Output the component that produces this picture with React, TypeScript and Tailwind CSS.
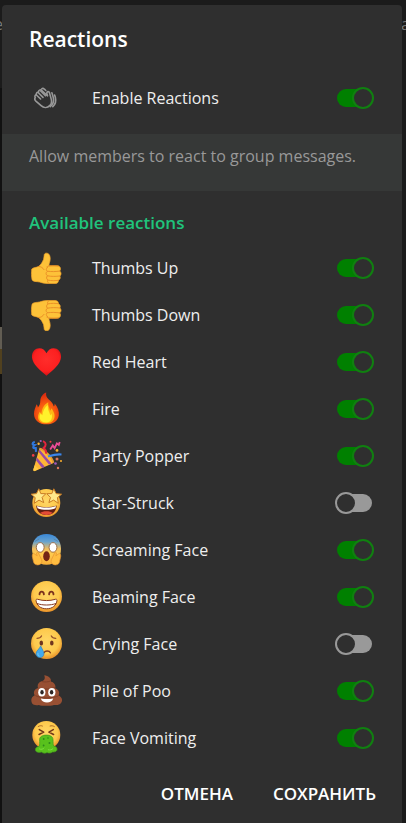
import { useState } from "react";
import type { ReactNode } from "react";

interface Reaction {
  id: string;
  label: string;
  emoji: ReactNode;
  enabled: boolean;
}

function FaceGradient({ id }: { id: string }) {
  return (
    <radialGradient id={id} cx="0.5" cy="0.42" r="0.56">
      <stop offset="0" stopColor="#ffd766" />
      <stop offset="0.72" stopColor="#fdc94c" />
      <stop offset="1" stopColor="#eb962c" />
    </radialGradient>
  );
}

function ThumbShape() {
  return (
    <>
      <path
        d="M1.8 17C3.6 15.3 6.5 15.6 8.4 14.5c2.8-1.8 4-4.6 5.1-7 .6-1.8.4-3.5.8-5 .7-2 4-1.8 5.2.6 1.2 2.8.7 5.7-.2 8.2l-.5 2.5h8.7c2.7 0 4.1 3.5 2.1 5.2 1.9 1.3 1.9 3.9.2 5 1 1.7.2 3.7-1.5 4.3.4 2-1.1 3.2-3.3 3.2H17c-4.3 0-6.4-1.6-9.5-1.8-2.2-.2-4.2-.3-5.4-1.8-.8-3.5-.8-7.5-.3-10.9Z"
        fill="#fdc239"
        stroke="#f3a329"
        strokeWidth="0.7"
      />
      <path
        d="M16.8 14.8c1.5-1.2 7-1.2 11.5-.7M17.5 19.2c4 .7 8.5.4 12.2-.1M17.4 23.8c4 .8 8.5.7 12.3.2M18 28.1c3.5.8 7.1.7 10.4.2M17.6 15.3c-1.7 1.3-1.8 3.2-.2 4-1.7 1-1.8 3.5 0 4.5-1.3 1.1-1 3.6.6 4.3-.9 1.1-.5 2.4.5 3M8.6 14.5c2.4-.2 4.4 1.5 5.4 3.1"
        fill="none"
        stroke="#e88b25"
        strokeWidth="0.9"
        strokeLinecap="round"
      />
    </>
  );
}

function EmojiSvg({ children }: { children: ReactNode }) {
  return (
    <svg viewBox="0 0 32 33" className="h-[33px] w-8" aria-hidden="true">
      {children}
    </svg>
  );
}

const thumbsUp = (
  <EmojiSvg>
    <g transform="translate(0 1)">
      <ThumbShape />
    </g>
  </EmojiSvg>
);

const thumbsDown = (
  <EmojiSvg>
    <g transform="matrix(1 0 0 -1 0 34)">
      <ThumbShape />
    </g>
  </EmojiSvg>
);

const redHeart = (
  <EmojiSvg>
    <defs>
      <radialGradient id="heart" cx="0.5" cy="0.4" r="0.62">
        <stop offset="0" stopColor="#ff2d2b" />
        <stop offset="0.7" stopColor="#fc2020" />
        <stop offset="1" stopColor="#c90f13" />
      </radialGradient>
    </defs>
    <path
      d="M16.5 30.8C13.5 28 4.5 21.8 2.4 14.6.6 8 4.5 3.2 9.3 3.2c3.2 0 5.7 1.9 7.2 5 1.5-3.1 4-5 7.2-5 4.8 0 8.7 4.8 6.9 11.4-2.1 7.2-11.1 13.4-14.1 16.2Z"
      fill="url(#heart)"
    />
  </EmojiSvg>
);

const fire = (
  <EmojiSvg>
    <defs>
      <radialGradient id="flame" cx="0.5" cy="0.68" r="0.62">
        <stop offset="0" stopColor="#ff8b12" />
        <stop offset="0.55" stopColor="#f75a10" />
        <stop offset="1" stopColor="#dc2c10" />
      </radialGradient>
    </defs>
    <path
      d="M16.2.5c-.5 3 .3 4.8 2.3 6.7 3 2.5 4.7 4.5 5.3 7.4.7-.7.9-2 .8-3.2 3.2 3.4 4.8 8 4.2 12-.9 5.4-5.6 8.9-12.2 8.9C9 32.3 4.1 28.3 4 21.9c-.1-3.7 1.6-6.9 2.6-9.7.8 1 1.2 2 1.3 3.3 2-2.3 2.3-4.3 2.4-7C10.5 5 12.8 1.8 16.2.5Z"
      fill="url(#flame)"
    />
    <path
      d="M18.3 10.2c-.6 3.7 1.2 5.2 1.7 8.6.8-.6 1.2-1.4 1.3-2.5 2.9 3.4 4.3 7.8 2.5 11.2-1.5 2.8-4.3 3.8-7.5 3.8-4.8 0-8.2-2.4-8.2-6.4 0-2.2.8-4 1.9-5.5.2 1.2.7 2 1.4 2.6.4-5.2 2.6-9.6 6.9-11.8Z"
      fill="#ffb814"
    />
    <path
      d="M18 13c-.8 5 1.6 6.5 2.2 10.2.6-.4 1-1 1.2-1.8 1.8 4.6-.6 9-5.2 9-4.2 0-6.6-2.2-6.6-5.6 0-1.4.5-2.6 1.2-3.6.3 1 .9 1.7 1.6 2.1.5-4.4 2.4-8.4 5.6-10.3Z"
      fill="#fff12b"
    />
  </EmojiSvg>
);

const partyPopper = (
  <EmojiSvg>
    <path d="M9.3 9.8c2.5-.5 6 2.4 8.8 5.2 3 3 5.6 6.6 4.9 9.2L5.1 32c-1.2.5-2-.3-1.7-1.5L9.3 9.8Z" fill="#ffb735" />
    <path d="m8.7 13 10.2 12.6 2.6-1.2L9.5 10.4l-.8 2.6ZM6.1 21.4l6.1 7.6 2.6-1.2-7.9-9.2-.8 2.8Z" fill="#9a4aa5" />
    <path d="M4.7 26.2 8.5 30l-3.2 1.8c-1.4.6-2.2-.2-1.9-1.5l1.3-4.1Z" fill="#ffca45" />
    <path d="M9.3 9.7c3.8 0 13.6 8.6 14 14.2" fill="none" stroke="#e29b34" strokeWidth="1.8" />
    <path d="M13 2.1c3.5 1.6 3.4 4.4.6 6.9 3 2.3 2.8 3.8 2.4 5.6" fill="none" stroke="#e5243c" strokeWidth="2" />
    <path d="m20.2 10.5 2.6-4.1 1.8 2.8 2.3-4.8 1.9 1.6.9-3" fill="none" stroke="#ed4c96" strokeWidth="1.8" />
    <path d="M18 17.5c4.5-1.4 6.7-2.5 13.5-2" fill="none" stroke="#3a86ea" strokeWidth="2.2" />
    <path d="M4.8 2.8c-3 1-2.9 3 0 3.2-2.4 1.9-2.2 3.5 1 3.1l.2 3.8" fill="none" stroke="#2f76da" strokeWidth="2.1" />
    <g fill="#f23c45"><circle cx="3.2" cy="16.4" r="1.3" /><circle cx="20.5" cy="2.8" r="1" /></g>
    <g fill="#ffb22f"><circle cx="8.6" cy="4.8" r="1.2" /><circle cx="27" cy="11.4" r="1.4" /><circle cx="31" cy="22" r="1" /></g>
    <g fill="#a35abf"><circle cx="10.7" cy="2" r="1.1" /><circle cx="25.5" cy="24.5" r="1.3" /></g>
    <g fill="#dc795c"><circle cx="27" cy="20" r="1.5" /><circle cx="28" cy="29" r="1.2" /></g>
  </EmojiSvg>
);

const starStruck = (
  <EmojiSvg>
    <defs><FaceGradient id="face-star" /></defs>
    <circle cx="16.3" cy="17" r="14" fill="url(#face-star)" />
    <path d="M6.2 19.5c6.1 2.2 14.4 2.2 20.5 0-.4 6-4.3 9.6-10.2 9.6S6.5 25.5 6.2 19.5Z" fill="#621d13" />
    <path d="M7 20c5.8 2 13.3 2 19 0l-.5 2.2c-5.2 2-12.8 2-18 0L7 20Z" fill="#fff" />
    <path d="M10.3 26.8c2.3-2.1 9.9-2.1 12.3 0-3 3-9.2 3-12.3 0Z" fill="#e34b35" />
    <g fill="#ffe98b" stroke="#c97b22" strokeWidth="1" strokeLinejoin="round">
      <path d="m8.8 2.8 2 4.8 5 .1-3.7 3.7 1.6 5.2-4.7-2.5-4.7 3.2.9-5.7L1 8.2l5.5-.6 2.3-4.8Z" />
      <path d="m23.8 2.8-2 4.8-5 .1 3.7 3.7-1.6 5.2 4.7-2.5 4.7 3.2-.9-5.7 4.2-3.4-5.5-.6-2.3-4.8Z" />
    </g>
  </EmojiSvg>
);

const screamingFace = (
  <EmojiSvg>
    <defs>
      <linearGradient id="face-scream" x2="0" y2="1">
        <stop offset="0" stopColor="#3987d7" />
        <stop offset="0.25" stopColor="#68a3cf" />
        <stop offset="0.48" stopColor="#efbd60" />
        <stop offset="0.65" stopColor="#ffcb4e" />
        <stop offset="1" stopColor="#f7ae38" />
      </linearGradient>
    </defs>
    <path d="M16.5 1C25.1 1 31 6.8 31 15.7c0 8.7-5.3 16-14.5 16S2 24.4 2 15.7C2 6.8 7.9 1 16.5 1Z" fill="url(#face-scream)" />
    <path d="M3.6 20.3c-1 .4-1.7 2.3-1.1 4.1l1.1 4.7c.5 2.3 2.8 3.2 5.4 2.6 2.4-.5 3.5-2.4 2.6-5L8.4 20c-.7-1.4-2.3-.7-1.8 1l.6 1.8-3.6-2.5ZM29.4 20.3c1 .4 1.7 2.3 1.1 4.1l-1.1 4.7c-.5 2.3-2.8 3.2-5.4 2.6-2.4-.5-3.5-2.4-2.6-5l3.2-6.7c.7-1.4 2.3-.7 1.8 1l-.6 1.8 3.6-2.5Z" fill="#ffbd41" stroke="#e69430" strokeWidth="0.7" />
    <g fill="#fff" stroke="#8a542d" strokeWidth="0.8"><ellipse cx="10.2" cy="14.4" rx="3.9" ry="4.8" /><ellipse cx="23" cy="14.4" rx="3.9" ry="4.8" /></g>
    <ellipse cx="16.5" cy="23.2" rx="3.3" ry="5" fill="#722516" />
    <path d="M5.2 8.3 9 6.1m15 0 3.8 2.2" fill="none" stroke="#5580a5" strokeWidth="0.8" strokeLinecap="round" />
  </EmojiSvg>
);

const beamingFace = (
  <EmojiSvg>
    <defs><FaceGradient id="face-beam" /></defs>
    <circle cx="16.5" cy="16.5" r="15.5" fill="url(#face-beam)" />
    <path d="M9.5 14.4c.2-3.6 4.2-3.6 4.4 0m5.2 0c.2-3.6 4.2-3.6 4.4 0" fill="none" stroke="#7b321c" strokeWidth="1.8" strokeLinecap="round" />
    <path d="M6 20.3c0-1 .8-1.3 1.7-1 5.6 1.7 12 1.7 17.6 0 .9-.3 1.7 0 1.7 1-.4 5.2-4.7 8.5-10.5 8.5S6.4 25.5 6 20.3Z" fill="#fff" stroke="#87391f" strokeWidth="1" />
    <path d="M7 23.5c5.5 2 13.5 2 19 0" fill="none" stroke="#87391f" strokeWidth="1" />
  </EmojiSvg>
);

const cryingFace = (
  <EmojiSvg>
    <defs><FaceGradient id="face-cry" /></defs>
    <circle cx="16.5" cy="16.5" r="15.5" fill="url(#face-cry)" />
    <g fill="#70351e"><ellipse cx="11.3" cy="16" rx="1.8" ry="2.5" /><ellipse cx="21.8" cy="16" rx="1.8" ry="2.5" /></g>
    <path d="M7 11.3c2 0 3.7-.8 4.5-2.4m9.8 0c.8 1.6 2.5 2.4 4.5 2.4" fill="none" stroke="#96502b" strokeWidth="1.2" strokeLinecap="round" />
    <path d="M14 25.8c1.1-2.4 5.3-2.4 6.4 0" fill="none" stroke="#843b1d" strokeWidth="1.4" strokeLinecap="round" />
    <path d="M10.7 18.8c1 3 3.2 5.2 3.2 7.9 0 2.3-1.6 3.9-3.9 3.9-2.6 0-4.1-1.7-4-4 .2-2.9 3.5-4.6 4.7-7.8Z" fill="#43a9ed" stroke="#2e7eb6" strokeWidth="0.6" />
    <path d="M8 26.2c-.4 1.8.5 2.6 1.5 2.9" fill="none" stroke="#79d0ff" strokeWidth="1" />
  </EmojiSvg>
);

const pileOfPoo = (
  <EmojiSvg>
    <path
      d="M14.2 1.3c4.8.7 7.3 3.2 6.7 6.2 3.5 1 5.4 4 4.1 6.7 3.6 1.2 5.2 4.4 3.5 7.1 3.4 1.8 4.6 4.9 2.5 7.8-1.4 2-4.3 2.3-7.1 1.8-4 1.2-11.7 1.2-15 0-3 .6-6 .1-7-2-1.4-3.1-.3-6.1 2.8-7.6-1.9-2.9-.4-6.3 3.3-7.3-1.1-3.3.6-5.8 3.6-6.7 2.9-.7 3.9-2.7 2.6-6Z"
      fill="#985033"
    />
    <path d="M9 14.3c5.2 1.3 11.7 1.1 16-1M5.8 21.8c4.2 2.8 18.2 2.9 22.5 0M12 7.6c2.7.7 6.4.5 8.6-.7" fill="none" stroke="#7c3d27" strokeWidth="0.9" strokeLinecap="round" />
    <g fill="#fff"><ellipse cx="11.8" cy="18.2" rx="3.6" ry="4.3" /><ellipse cx="21.8" cy="18.2" rx="3.6" ry="4.3" /></g>
    <g fill="#2d2523"><ellipse cx="12" cy="18.2" rx="1.7" ry="2.3" /><ellipse cx="21.6" cy="18.2" rx="1.7" ry="2.3" /></g>
    <path d="M10.8 24.4c4 .9 8.6.9 12.4 0-1.1 5.4-11.3 5.4-12.4 0Z" fill="#fff" />
  </EmojiSvg>
);

const faceVomiting = (
  <EmojiSvg>
    <defs><FaceGradient id="face-vomit" /></defs>
    <circle cx="16.3" cy="14" r="14" fill="url(#face-vomit)" />
    <path d="m9.3 8.6 4.4 2.5L9 13.5m14.3-4.9-4.4 2.5 4.7 2.4" fill="none" stroke="#733619" strokeWidth="1.5" strokeLinecap="round" strokeLinejoin="round" />
    <path d="M8.2 5.5c1.7-1 3.1-1 4.2-.5m7.7 0c1.5-.5 2.9-.2 4.2.5" fill="none" stroke="#a96726" strokeWidth="1" strokeLinecap="round" />
    <path
      d="M9.6 18.6c0-3 3-4.5 6.7-4.5s6.7 1.5 6.7 4.5c.3 2.7-.2 5 .8 6.5 2.5.4 3.8 2.2 3.1 4.2-.8 1.7-3.1 1.8-4.4 1.6-1.5 1.5-4 1.3-5.4.6-1.7 1-4.3.9-5.5-.4-2.4.6-6 .4-6.2-2-.2-2.2 1.5-3.2 3.8-3.8.8-1.5.4-4.2.4-6.7Z"
      fill="#58c11c"
      stroke="#429a1b"
      strokeWidth="0.7"
    />
    <g fill="#2d891b"><circle cx="13.7" cy="18" r="0.9" /><circle cx="18" cy="17" r="0.8" /><circle cx="19.5" cy="22" r="1" /><circle cx="13.6" cy="24.5" r="0.9" /></g>
    <path d="M9.5 28c2 .9 3.6 0 4.5-1m4.3 1.8c1.8.5 3.6-.1 4.5-1" fill="none" stroke="#7ddd3d" strokeWidth="1" strokeLinecap="round" />
  </EmojiSvg>
);

const initialReactions: Reaction[] = [
  { id: "thumbs-up", label: "Thumbs Up", emoji: thumbsUp, enabled: true },
  { id: "thumbs-down", label: "Thumbs Down", emoji: thumbsDown, enabled: true },
  { id: "red-heart", label: "Red Heart", emoji: redHeart, enabled: true },
  { id: "fire", label: "Fire", emoji: fire, enabled: true },
  { id: "party-popper", label: "Party Popper", emoji: partyPopper, enabled: true },
  { id: "star-struck", label: "Star-Struck", emoji: starStruck, enabled: false },
  { id: "screaming-face", label: "Screaming Face", emoji: screamingFace, enabled: true },
  { id: "beaming-face", label: "Beaming Face", emoji: beamingFace, enabled: true },
  { id: "crying-face", label: "Crying Face", emoji: cryingFace, enabled: false },
  { id: "pile-of-poo", label: "Pile of Poo", emoji: pileOfPoo, enabled: true },
  { id: "face-vomiting", label: "Face Vomiting", emoji: faceVomiting, enabled: true },
];

function HandsIcon() {
  return (
    <svg
      viewBox="0 0 24 24"
      className="size-6"
      fill="none"
      stroke="#999"
      strokeWidth="1.6"
      strokeLinecap="round"
      strokeLinejoin="round"
      aria-hidden="true"
    >
      <path d="M9 11.4 4.6 7M6.6 13 2.4 9M11.4 9.8 6.6 5" />
      <path d="M1.6 14.8c-1-1.1-1.1-2.2-.3-3-.8-1.2-.3-2.8 1-3.2-.2-1.5.8-2.6 2.2-2.5-.1-1.8 1.8-3 3.1-1.7l5.9 5.4-.6-2.6c-.3-1.7 2-2.3 2.5-.6l1.7 6c.8 2.8.5 5.2-1.1 6.8-2.6 2.7-6.3 2.8-8.9.3l-5.5-4.9Z" />
      <path d="M7.6 3c.9-.8 2-.6 2.8.2l1.4 1.3M17.9 6.7l1.3 4.6c1 3.7.2 6.7-2.9 9.4M20.6 9l.8 2.6c.9 3.6 0 6.7-2.6 9.1" />
    </svg>
  );
}

interface SettingRowProps {
  id: string;
  label: string;
  icon: ReactNode;
  checked: boolean;
  onChange: () => void;
}

function SettingRow({ id, label, icon, checked, onChange }: SettingRowProps) {
  return (
    <div className="flex h-[47px] items-center pr-[30px] pl-7">
      <span className="flex w-8 shrink-0 justify-center">{icon}</span>
      <label htmlFor={id} className="ml-[30px] flex-1 text-base leading-6">
        {label}
      </label>
      <input
        id={id}
        type="checkbox"
        checked={checked}
        onChange={onChange}
        className="relative h-[18px] w-[35px] shrink-0 cursor-pointer appearance-none rounded-full bg-[#999] before:absolute before:-top-0.5 before:-left-0.5 before:size-[22px] before:rounded-full before:border-2 before:border-[#999] before:bg-[#2f2f2f] checked:bg-[#008000] checked:before:left-[15px] checked:before:border-[#108010]"
      />
    </div>
  );
}

// Slivers of the chat that stay visible around the dialog
function ChatBackdrop() {
  return (
    <div className="absolute inset-0 -z-10 overflow-hidden bg-[#1b1b1b] text-base text-[#777]" aria-hidden="true">
      <div className="absolute top-[88px] bottom-0 left-0 w-1 bg-[#111]" />
      <div className="absolute top-[327px] left-0 h-[22px] w-1 bg-[#625d53]" />
      <div className="absolute top-[349px] left-0 h-[25px] w-1 bg-[#51411f]" />
      <span className="absolute top-3 -left-1.5 leading-6">e</span>
      <span className="absolute top-3 -right-1 leading-6">a</span>
    </div>
  );
}

export default function App() {
  const [reactionsEnabled, setReactionsEnabled] = useState(true);
  const [reactions, setReactions] = useState(initialReactions);

  const toggleReaction = (id: string) => {
    setReactions((current) =>
      current.map((reaction) => (reaction.id === id ? { ...reaction, enabled: !reaction.enabled } : reaction)),
    );
  };

  return (
    <div className="relative isolate flex min-h-screen flex-col pt-[5px] pr-1 pl-0.5 font-['Open_Sans','Noto_Sans',sans-serif] text-[#eee]">
      <ChatBackdrop />
      <main className="flex-1 rounded-t bg-[#2f2f2f]">
        <h1 className="px-[27px] pt-5 text-[21px] leading-7 font-semibold text-white">Reactions</h1>

        <div className="pt-[21px] pb-[13px]">
          <SettingRow
            id="enable-reactions"
            label="Enable Reactions"
            icon={<HandsIcon />}
            checked={reactionsEnabled}
            onChange={() => setReactionsEnabled(!reactionsEnabled)}
          />
        </div>
        <p className="bg-[#363837] px-[27px] pt-2.5 pb-[23px] text-base leading-6 text-[#999]">
          Allow members to react to group messages.
        </p>

        <section>
          <h2 className="px-[27px] pt-5 pb-[9px] text-[17px] leading-6 font-semibold text-[#20c47c]">
            Available reactions
          </h2>
          <ul>
            {reactions.map((reaction) => (
              <li key={reaction.id}>
                <SettingRow
                  id={reaction.id}
                  label={reaction.label}
                  icon={reaction.emoji}
                  checked={reaction.enabled}
                  onChange={() => toggleReaction(reaction.id)}
                />
              </li>
            ))}
          </ul>
        </section>

        <footer className="flex justify-end gap-10 px-[26px] pt-[21px] pb-4 text-[17px] leading-6 font-semibold text-white">
          <button type="button">ОТМЕНА</button>
          <button type="button">СОХРАНИТЬ</button>
        </footer>
      </main>
    </div>
  );
}
